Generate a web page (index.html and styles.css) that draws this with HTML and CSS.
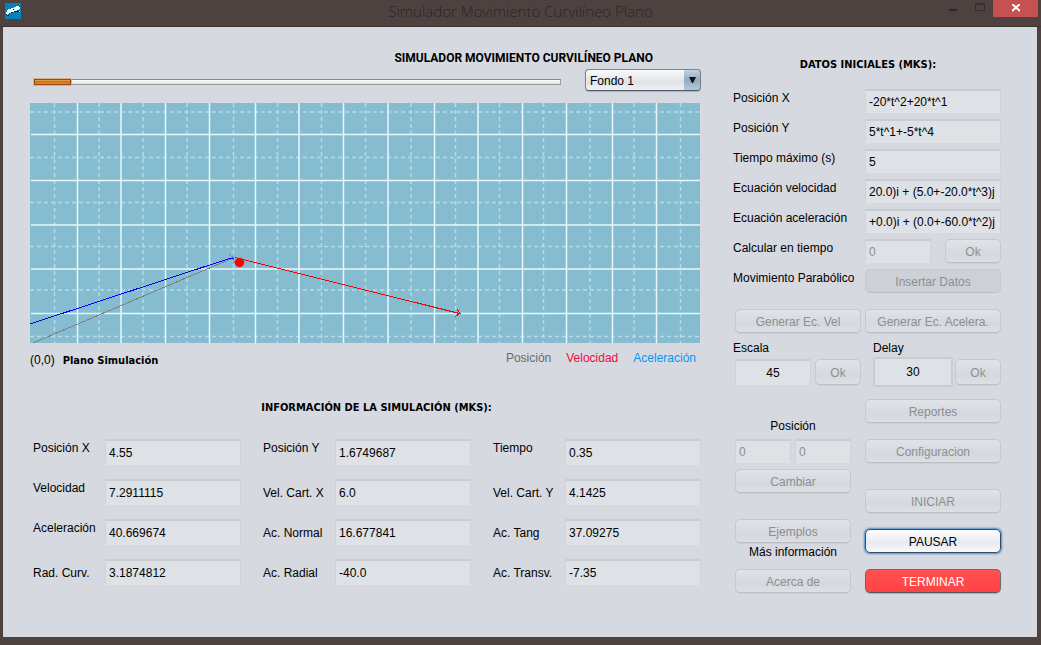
FILE: index.html
```html
<!DOCTYPE html>
<html lang="es">
<head>
<meta charset="utf-8">
<title>Simulador Movimiento Curvilíneo Plano</title>
<link rel="stylesheet" href="styles.css">
</head>
<body>
<header class="titlebar">
  <svg class="app-icon" viewBox="0 0 16 16" shape-rendering="crispEdges" aria-hidden="true">
    <rect width="16" height="16" fill="#0581b8"/>
    <path d="M11 3h3v1h1v2h-1v1h-2v1h-3v1h-3v1h-2v1h-1v1h-2v-3h1v-2h2v-1h2v-1h3v-1h2z" fill="#f4ffff"/>
    <path d="M14 8h1v1h-1zM5 6h-2v1h2z" fill="#f4ffff"/>
    <path d="M14 3h1v1h-1zM9 8h5v1h-5zM12 7h1v1h-1zM6 9h2v1h-2zM1 11h1v1h-1zM2 12h2v1h-2zM4 10h1v1h-1zM8 6h1v1h-1z" fill="#06222e"/>
  </svg>
  <h1 class="titlebar-text">Simulador Movimiento Curvilíneo Plano</h1>
  <div class="window-buttons">
    <button class="win-btn" aria-label="Minimizar"><svg width="10" height="12" viewBox="0 0 10 12"><rect x="1" y="8" width="8" height="2" fill="#2a2423"/></svg></button>
    <button class="win-btn" aria-label="Maximizar"><svg width="10" height="12" viewBox="0 0 10 12" shape-rendering="crispEdges"><path d="M0 2h10v8h-10zM1 4v5h8v-5z" fill="#3a302f" fill-rule="evenodd"/></svg></button>
    <button class="win-btn win-close" aria-label="Cerrar"><svg width="8" height="8" viewBox="0 0 8 8"><path d="M0 0l8 7M8 0l-8 7" stroke="#fff" stroke-width="2"/></svg></button>
  </div>
</header>

<main class="panel">
  <section class="simulation">
    <h2 class="heading heading-main">SIMULADOR MOVIMIENTO CURVILÍNEO PLANO</h2>
    <div class="toolbar">
      <div class="progress" role="progressbar" aria-label="Progreso" aria-valuenow="7" aria-valuemin="0" aria-valuemax="100"><div class="progress-fill" style="width:7%"></div></div>
      <div class="combo">
        <select class="combo-select" aria-label="Fondo"><option>Fondo 1</option></select>
        <svg class="combo-arrow" width="7" height="6" viewBox="0 0 7 6" aria-hidden="true"><path d="M0 0h7l-3 6h-1z" fill="#111"/></svg>
      </div>
    </div>

    <svg class="plane" viewBox="0 0 670 240" preserveAspectRatio="none" role="img" aria-label="Plano de simulación">
      <rect width="670" height="240" fill="#86bccf"/>
      <path class="grid-minor" d="M24.5 0V240M69 0V240M113 0V240M157 0V240M203.500 0V240M247.500 0V240M291.500 0V240M335.500 0V240M381 0V240M425.500 0V240M469.500 0V240M513.500 0V240M560 0V240M604 0V240M650.500 0V240"/>
      <path class="grid-minor" d="M0 9H670M0 54.500H670M0 99.500H670M0 143.500H670M0 187H670M0 233.500H670"/>
      <path class="grid-major" d="M47.500 0V240M91 0V240M135.500 0V240M179.500 0V240M225.500 0V240M269 0V240M313.500 0V240M358 0V240M404.500 0V240M448 0V240M492.500 0V240M536.500 0V240M582.500 0V240M626.500 0V240"/>
      <path class="grid-major" d="M1 31.500H670M1 77.500H670M1 122H670M1 166H670M1 210.500H670"/>
      <g fill="none" shape-rendering="crispEdges">
        <path d="M3 240L203 155M199.500 151.500l4 3.500l1 5" stroke="#808080"/>
        <path d="M0 221L201 155h3" stroke="#0000ff"/>
        <path d="M205 154.500L429.500 210.500M427 206l3 4.500l-5 3" stroke="#ff0000"/>
      </g>
      <circle cx="209.500" cy="159.500" r="4.700" fill="#ff0000"/>
    </svg>

    <div class="legend">
      <span class="origin">(0,0)</span>
      <strong class="plane-name">Plano Simulación</strong>
      <span class="legend-item legend-pos">Posición</span>
      <span class="legend-item legend-vel">Velocidad</span>
      <span class="legend-item legend-acc">Aceleración</span>
    </div>

    <h2 class="heading heading-info">INFORMACIÓN DE LA SIMULACIÓN (MKS):</h2>
    <div class="info">
      <label class="raised" for="px">Posición X</label><input class="field" id="px" value="4.55" readonly>
      <label class="raised second" for="py">Posición Y</label><input class="field" id="py" value="1.6749687" readonly>
      <label class="raised second" for="ti">Tiempo</label><input class="field" id="ti" value="0.35" readonly>
      <label class="raised" for="ve">Velocidad</label><input class="field" id="ve" value="7.2911115" readonly>
      <label class="second" for="vx">Vel. Cart. X</label><input class="field" id="vx" value="6.0" readonly>
      <label class="second" for="vy">Vel. Cart. Y</label><input class="field" id="vy" value="4.1425" readonly>
      <label class="raised" for="ac">Aceleración</label><input class="field" id="ac" value="40.669674" readonly>
      <label class="second" for="an">Ac. Normal</label><input class="field" id="an" value="16.677841" readonly>
      <label class="second" for="at">Ac. Tang</label><input class="field" id="at" value="37.09275" readonly>
      <label for="rc">Rad. Curv.</label><input class="field" id="rc" value="3.1874812" readonly>
      <label class="second" for="ar">Ac. Radial</label><input class="field" id="ar" value="-40.0" readonly>
      <label class="second" for="av">Ac. Transv.</label><input class="field" id="av" value="-7.35" readonly>
    </div>
  </section>

  <aside class="settings">
    <h2 class="heading heading-data">DATOS INICIALES (MKS):</h2>
    <div class="form">
      <label for="fx">Posición X</label><input class="field" id="fx" value="-20*t^2+20*t^1" readonly>
      <label for="fy">Posición Y</label><input class="field" id="fy" value="5*t^1+-5*t^4" readonly>
      <label for="tm">Tiempo máximo (s)</label><input class="field" id="tm" value="5" readonly>
      <label for="ev">Ecuación velocidad</label><input class="field" id="ev" value="20.0)i + (5.0+-20.0*t^3)j" readonly>
      <label for="ea">Ecuación aceleración</label><input class="field" id="ea" value="+0.0)i + (0.0+-60.0*t^2)j" readonly>
      <label for="ct">Calcular en tiempo</label>
      <div class="field-action"><input class="field" id="ct" value="0" disabled><button class="btn" disabled>Ok</button></div>
      <label for="mp">Movimiento Parabólico</label><button class="btn btn-pressed" id="mp" disabled>Insertar Datos</button>
    </div>
    <div class="generate">
      <button class="btn" disabled>Generar Ec. Vel</button>
      <button class="btn" disabled>Generar Ec. Acelera.</button>
    </div>
    <div class="tuning">
      <label for="es">Escala</label>
      <label for="de">Delay</label>
      <div class="tune"><input class="field field-center" id="es" value="45" readonly><button class="btn" disabled>Ok</button></div>
      <div class="tune tune-delay"><input class="field field-center field-spinner" id="de" value="30" readonly><button class="btn" disabled>Ok</button></div>
    </div>
    <div class="actions">
      <div class="actions-left">
        <fieldset class="position">
          <legend class="position-title">Posición</legend>
          <div class="position-fields"><input class="field" aria-label="Posición X" value="0" disabled><input class="field" aria-label="Posición Y" value="0" disabled></div>
        </fieldset>
        <button class="btn btn-change" disabled>Cambiar</button>
        <button class="btn btn-examples" disabled>Ejemplos</button>
        <span class="more">Más información</span>
        <button class="btn" disabled>Acerca de</button>
      </div>
      <div class="actions-right">
        <button class="btn" disabled>Reportes</button>
        <button class="btn btn-config" disabled>Configuracion</button>
        <button class="btn" disabled>INICIAR</button>
        <button class="btn btn-pause">PAUSAR</button>
        <button class="btn btn-stop">TERMINAR</button>
      </div>
    </div>
  </aside>
</main>
</body>
</html>
```
FILE: styles.css
```css
* { box-sizing: border-box; }

body {
  margin: 0;
  min-height: 100vh;
  display: flex;
  flex-direction: column;
  background: #4e4240;
  color: #000;
  font: 12px/18px "Liberation Sans", Arial, sans-serif;
}

input, button, select { font: inherit; margin: 0; min-width: 0; }

.titlebar {
  display: grid;
  grid-template-columns: 104px 1fr 104px;
  height: 27px;
  border-bottom: 1px solid #3f3433;
}
.app-icon { width: 16px; height: 16px; margin: 3px 0 0 5px; }
.titlebar-text {
  margin: 0;
  text-align: center;
  font: 300 15px/22px "Open Sans", "Noto Sans", sans-serif;
  color: #2b2423;
}
.window-buttons { display: flex; justify-content: flex-end; align-items: flex-start; padding-right: 3px; }
.win-btn {
  display: flex;
  align-items: center;
  justify-content: center;
  width: 27px;
  height: 14px;
  padding: 0;
  border: 0;
  background: none;
}
.win-close { width: 45px; height: 17px; padding-bottom: 2px; background: #c75050; }

.panel {
  flex: 1;
  display: flex;
  gap: 32px;
  margin: 0 4px 8px 3px;
  padding: 22px 36px 40px 27px;
  background: #d6d9e0;
}
.simulation { flex: 1; min-width: 0; }
.settings { width: 268px; }

.heading { margin: 0; font-size: 12px; line-height: 18px; font-weight: bold; white-space: nowrap; }
.heading-main { text-align: right; padding-right: 48px; font-family: Roboto, "Liberation Sans", sans-serif; }
.heading-info, .heading-data, .plane-name { font-family: "DejaVu Sans Condensed", "DejaVu Sans", sans-serif; font-stretch: condensed; font-size: 11px; }
.heading-info { text-align: center; padding-left: 22px; margin-top: 29px; }
.heading-data { text-align: center; margin-top: 7px; padding-left: 2px; }

.toolbar { display: flex; align-items: center; gap: 24px; margin: 2px 0 12px; padding-left: 4px; }
.progress {
  flex: 1;
  height: 6px;
  margin-top: 4px;
  border: 1px solid #9b9da3;
  border-top-color: #85878d;
  background: linear-gradient(#fff, #e0e0e2);
}
.progress-fill {
  height: 6px;
  margin: -1px;
  border: 1px solid #9a4a10;
  background: linear-gradient(#e09a4c 25%, #c96d0c 26%, #e48a2c);
  box-shadow: 0 0 0 1px #d5b28e;
}
.combo { position: relative; width: 116px; }
.combo-select {
  display: block;
  appearance: none;
  width: 100%;
  height: 22px;
  padding: 1px 20px 0 4px;
  border: 1px solid #7d828a;
  border-bottom-color: #4e5a69;
  border-radius: 4px;
  background:
    linear-gradient(#c3d3e2, #92abc1 50%, #b4c8da) right / 16px 100% no-repeat,
    linear-gradient(#fafafc, #dfe2e7 60%, #eff1f4);
  box-shadow: 0 1px 1px #aeb3bc;
  color: #000;
}
.combo-arrow { position: absolute; right: 5px; top: 8px; pointer-events: none; }

.plane { display: block; width: calc(100% - 1px); height: 240px; }
.grid-minor { fill: none; stroke: #b3dbe7; stroke-width: 1.5; stroke-dasharray: 4 3; }
.grid-major { fill: none; stroke: #e6f8fc; stroke-width: 1.5; }

.legend { display: flex; padding: 6px 5px 0 0; height: 27px; }
.origin { margin: 2px 8px 0 0; }
.plane-name { margin: 3px auto 0 0; }
.legend-item { margin-left: 15px; }
.legend-acc { color: #0a95f0; }
.legend-pos { color: #6b6b6b; }
.legend-vel { color: #ef0c3c; }

.info {
  display: grid;
  grid-template-columns: 72px 1fr 94px 1fr 94px 1fr;
  row-gap: 14px;
  padding-left: 3px;
  margin-top: 22px;
  align-items: center;
}
.info label { padding-top: 2px; }
.info .raised { padding: 0 0 8px; }
.info .second { padding-left: 22px; }

.field {
  width: 100%;
  height: 24px;
  padding: 1px 0 0 3px;
  border: 1px solid #cfd2d6;
  border-top: 2px solid #c9ccd0;
  border-bottom: 1px solid #e0e2e6;
  border-radius: 0;
  background: #dee1e5;
  color: #000;
}
.info .field { height: 26px; padding-top: 0; }
.field:disabled { color: #8e8f91; }
.field-center { text-align: center; padding: 0; }

.btn {
  height: 24px;
  padding: 1px 0 0;
  border: 1px solid #c6c8ce;
  border-bottom-color: #bcbec3;
  border-radius: 5px;
  background: linear-gradient(#e0e3e8, #d5d8de 60%, #dcdfe4);
  box-shadow: 0 1px 0 #cccfd5;
  color: #000;
  text-align: center;
}
.btn:disabled { color: #8e8f91; }
.btn.btn-pressed { background: #cdd0d7; box-shadow: none; }

.form {
  display: grid;
  grid-template-columns: 132px 1fr;
  row-gap: 6px;
  margin-top: 15px;
}
.form label { white-space: nowrap; }
.field-action { display: grid; grid-template-columns: 1fr 56px; gap: 14px; }

.generate { display: grid; grid-template-columns: 126px 1fr; gap: 4px; margin-top: 16px; padding-left: 2px; }

.tuning { display: grid; grid-template-columns: 128px 1fr; column-gap: 12px; align-items: center; margin-top: 6px; }
.tune { display: grid; grid-template-columns: 1fr 46px; gap: 4px; padding-left: 2px; align-items: center; }
.tune .field, .tune .btn { height: 26px; }
.tune-delay { padding-left: 0; gap: 2px; }
.tune .field-spinner { height: 30px; border: 2px solid #caccce; }

.actions { display: grid; grid-template-columns: 116px 1fr; gap: 14px; margin-top: 12px; padding-left: 2px; }
.actions-left, .actions-right { display: flex; flex-direction: column; }
.position { border: 0; margin: 18px 0 0; padding: 0; min-width: 0; }
.position-title { padding: 0; margin: 0 auto; }
.position-fields { display: grid; grid-template-columns: 1fr 1fr; gap: 4px; margin-top: 4px; }
.btn-change { margin-top: 6px; }
.btn-examples { margin-top: 26px; }
.more { text-align: center; height: 26px; }
.actions-right { gap: 16px; }
.btn-config { margin-bottom: 10px; }
.btn.btn-pause {
  border: 1px solid #3d4a5c;
  background: linear-gradient(#fdfdfe, #e7eaf1 60%, #f8fafc);
  box-shadow: 0 0 0 1px #70a3d1, 0 0 1px 2px #a3c1de;
}
.btn.btn-stop {
  border-color: #77676f;
  border-bottom-color: #4c5563;
  background: linear-gradient(#ff5151, #ff4343);
  box-shadow: 0 1px 1px #abb0ba;
  color: #fff;
}
```
